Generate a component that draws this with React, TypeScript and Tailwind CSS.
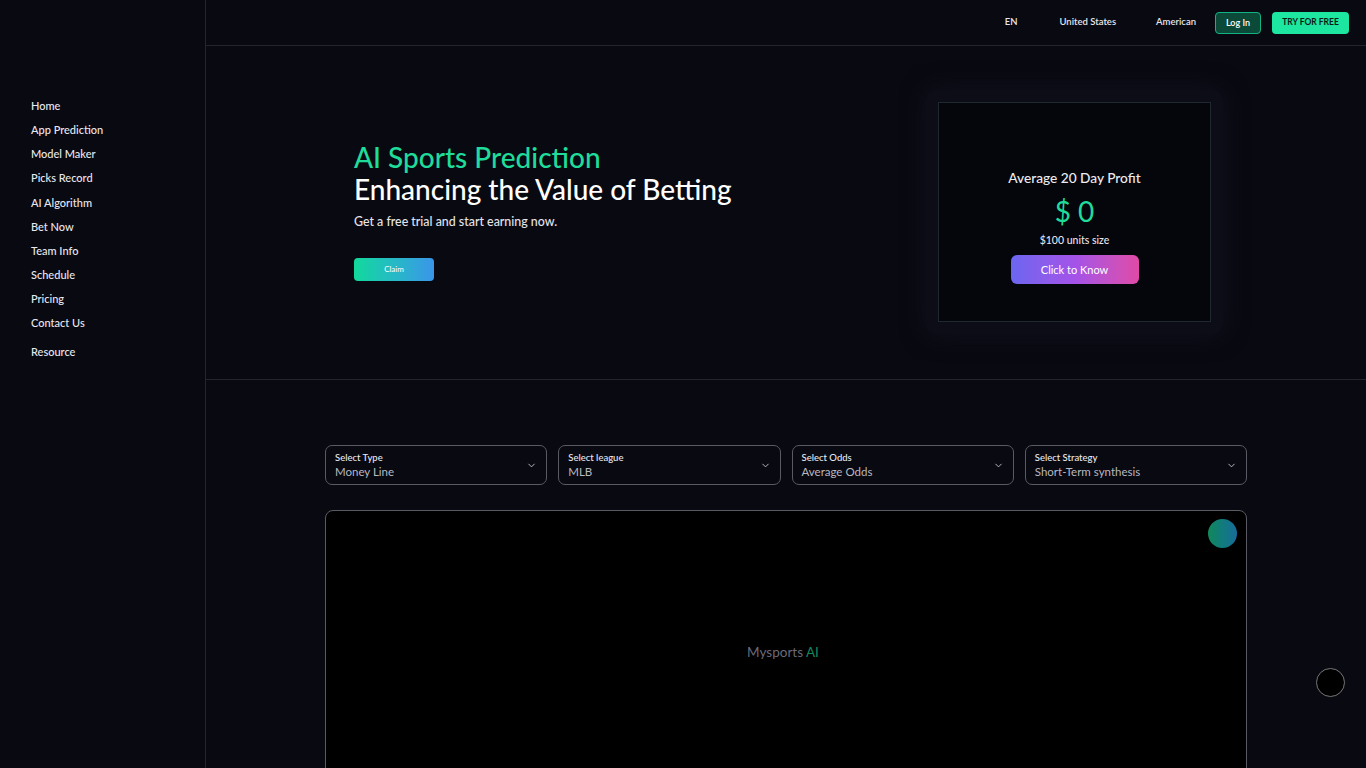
import { ChevronDown } from "lucide-react";

const navItems = [
  "Home",
  "App Prediction",
  "Model Maker",
  "Picks Record",
  "AI Algorithm",
  "Bet Now",
  "Team Info",
  "Schedule",
  "Pricing",
  "Contact Us",
];

const selects = [
  { label: "Select Type", value: "Money Line" },
  { label: "Select league", value: "MLB" },
  { label: "Select Odds", value: "Average Odds" },
  { label: "Select Strategy", value: "Short-Term synthesis" },
];

export default function App() {
  return (
    <div
      className="flex h-[768px] w-full overflow-hidden bg-[#090911] text-white"
      style={{ fontFamily: "Lato, 'Noto Sans', sans-serif" }}
    >
      {/* sidebar */}
      <aside className="w-[206px] shrink-0 border-r border-[#24242e] pl-[31px] pt-[97px]">
        <nav className="flex flex-col">
          {navItems.map((item) => (
            <a key={item} className="h-[24.15px] text-[11px] font-medium leading-[18px] text-[#e8e8ee]">
              {item}
            </a>
          ))}
          <a className="mt-[5px] text-[11px] font-medium leading-[18px] text-[#e8e8ee]">Resource</a>
        </nav>
      </aside>

      <main className="flex min-w-0 flex-1 flex-col">
        {/* header */}
        <header className="flex h-[46px] shrink-0 items-center justify-end border-b border-[#24242e] pr-[17px] text-[9.5px] font-semibold text-[#e6e6ea]">
          <span className="mr-[42px]">EN</span>
          <span className="mr-[40px]">United States</span>
          <span className="mr-[19px]">American</span>
          <button className="mr-[11px] h-[22px] w-[46px] rounded-[4px] border border-[#14b386] bg-[#0b4a38] text-[9px] font-semibold text-white">
            Log In
          </button>
          <button className="h-[22px] w-[77px] rounded-[4px] bg-[#1ce6a0] text-[8.5px] font-bold text-[#0b1a14]">
            TRY FOR FREE
          </button>
        </header>

        {/* hero */}
        <section className="flex h-[334px] shrink-0 items-start border-b border-[#24242e] pl-[148px] pr-[143px]">
          <div className="flex flex-1 flex-col pt-[95px]">
            <h1 className="text-[28px] font-medium leading-[32px] text-[#1fdc9b]">AI Sports Prediction</h1>
            <h2 className="text-[28px] font-medium leading-[32px] text-white">Enhancing the Value of Betting</h2>
            <p className="mt-[8px] text-[12.4px] font-medium text-[#e4e4ea]">Get a free trial and start earning now.</p>
            <button className="mt-[26px] h-[23px] w-[80px] rounded-[4px] bg-gradient-to-r from-[#12d99a] to-[#3a95e8] text-[8px] text-white">
              Claim
            </button>
          </div>
          <div className="mt-[44px] rounded-[10px] bg-[#0d0d17] p-[12px] shadow-[0_0_24px_rgba(20,20,35,0.8)]">
            <div className="flex h-[220px] w-[273px] flex-col items-center border border-[#1f2830] bg-[#05050c] pt-[65px]">
              <p className="text-[13.7px] font-medium text-[#ececf0]">Average 20 Day Profit</p>
              <p className="mt-[4px] text-[28px] font-normal leading-[36px] text-[#1fdc9b]">$ 0</p>
              <p className="mt-[4px] text-[10.5px] font-medium text-[#e4e4ea]">$100 units size</p>
              <button className="mt-[7px] h-[29px] w-[128px] rounded-[6px] bg-gradient-to-r from-[#6a66f0] via-[#a452e8] to-[#e049a6] text-[11px] text-white">
                Click to Know
              </button>
            </div>
          </div>
        </section>

        {/* predictions */}
        <section className="flex flex-1 flex-col items-center pt-[65px]">
          <div className="grid w-[922px] grid-cols-4 gap-[11px]">
            {selects.map((s) => (
              <div
                key={s.label}
                className="flex h-[40px] items-center justify-between rounded-[7px] border border-[#5a5a64] px-[9px]"
              >
                <div className="flex flex-col">
                  <span className="text-[9.5px] font-medium leading-[12px] text-[#e8e8ee]">{s.label}</span>
                  <span className="text-[11.5px] leading-[15px] text-[#b8b8c0]">{s.value}</span>
                </div>
                <ChevronDown size={11} className="text-[#c4c4cc]" />
              </div>
            ))}
          </div>

          <div className="relative mt-[25px] flex h-[300px] w-[922px] justify-center rounded-[8px] border border-[#5a5a64] bg-black pt-[131px]">
            <span className="pr-[6px] text-[13.5px] text-[#6b6b78]">
              Mysports <span className="text-[#13885f]">AI</span>
            </span>
            <div className="absolute right-[9px] top-[8px] h-[29px] w-[29px] rounded-full bg-gradient-to-r from-[#14885a] to-[#1a6b9a]" />
          </div>
        </section>
      </main>

      <div className="fixed left-[1316px] top-[668px] h-[29px] w-[29px] rounded-full border border-[#777] bg-black" />
    </div>
  );
}
